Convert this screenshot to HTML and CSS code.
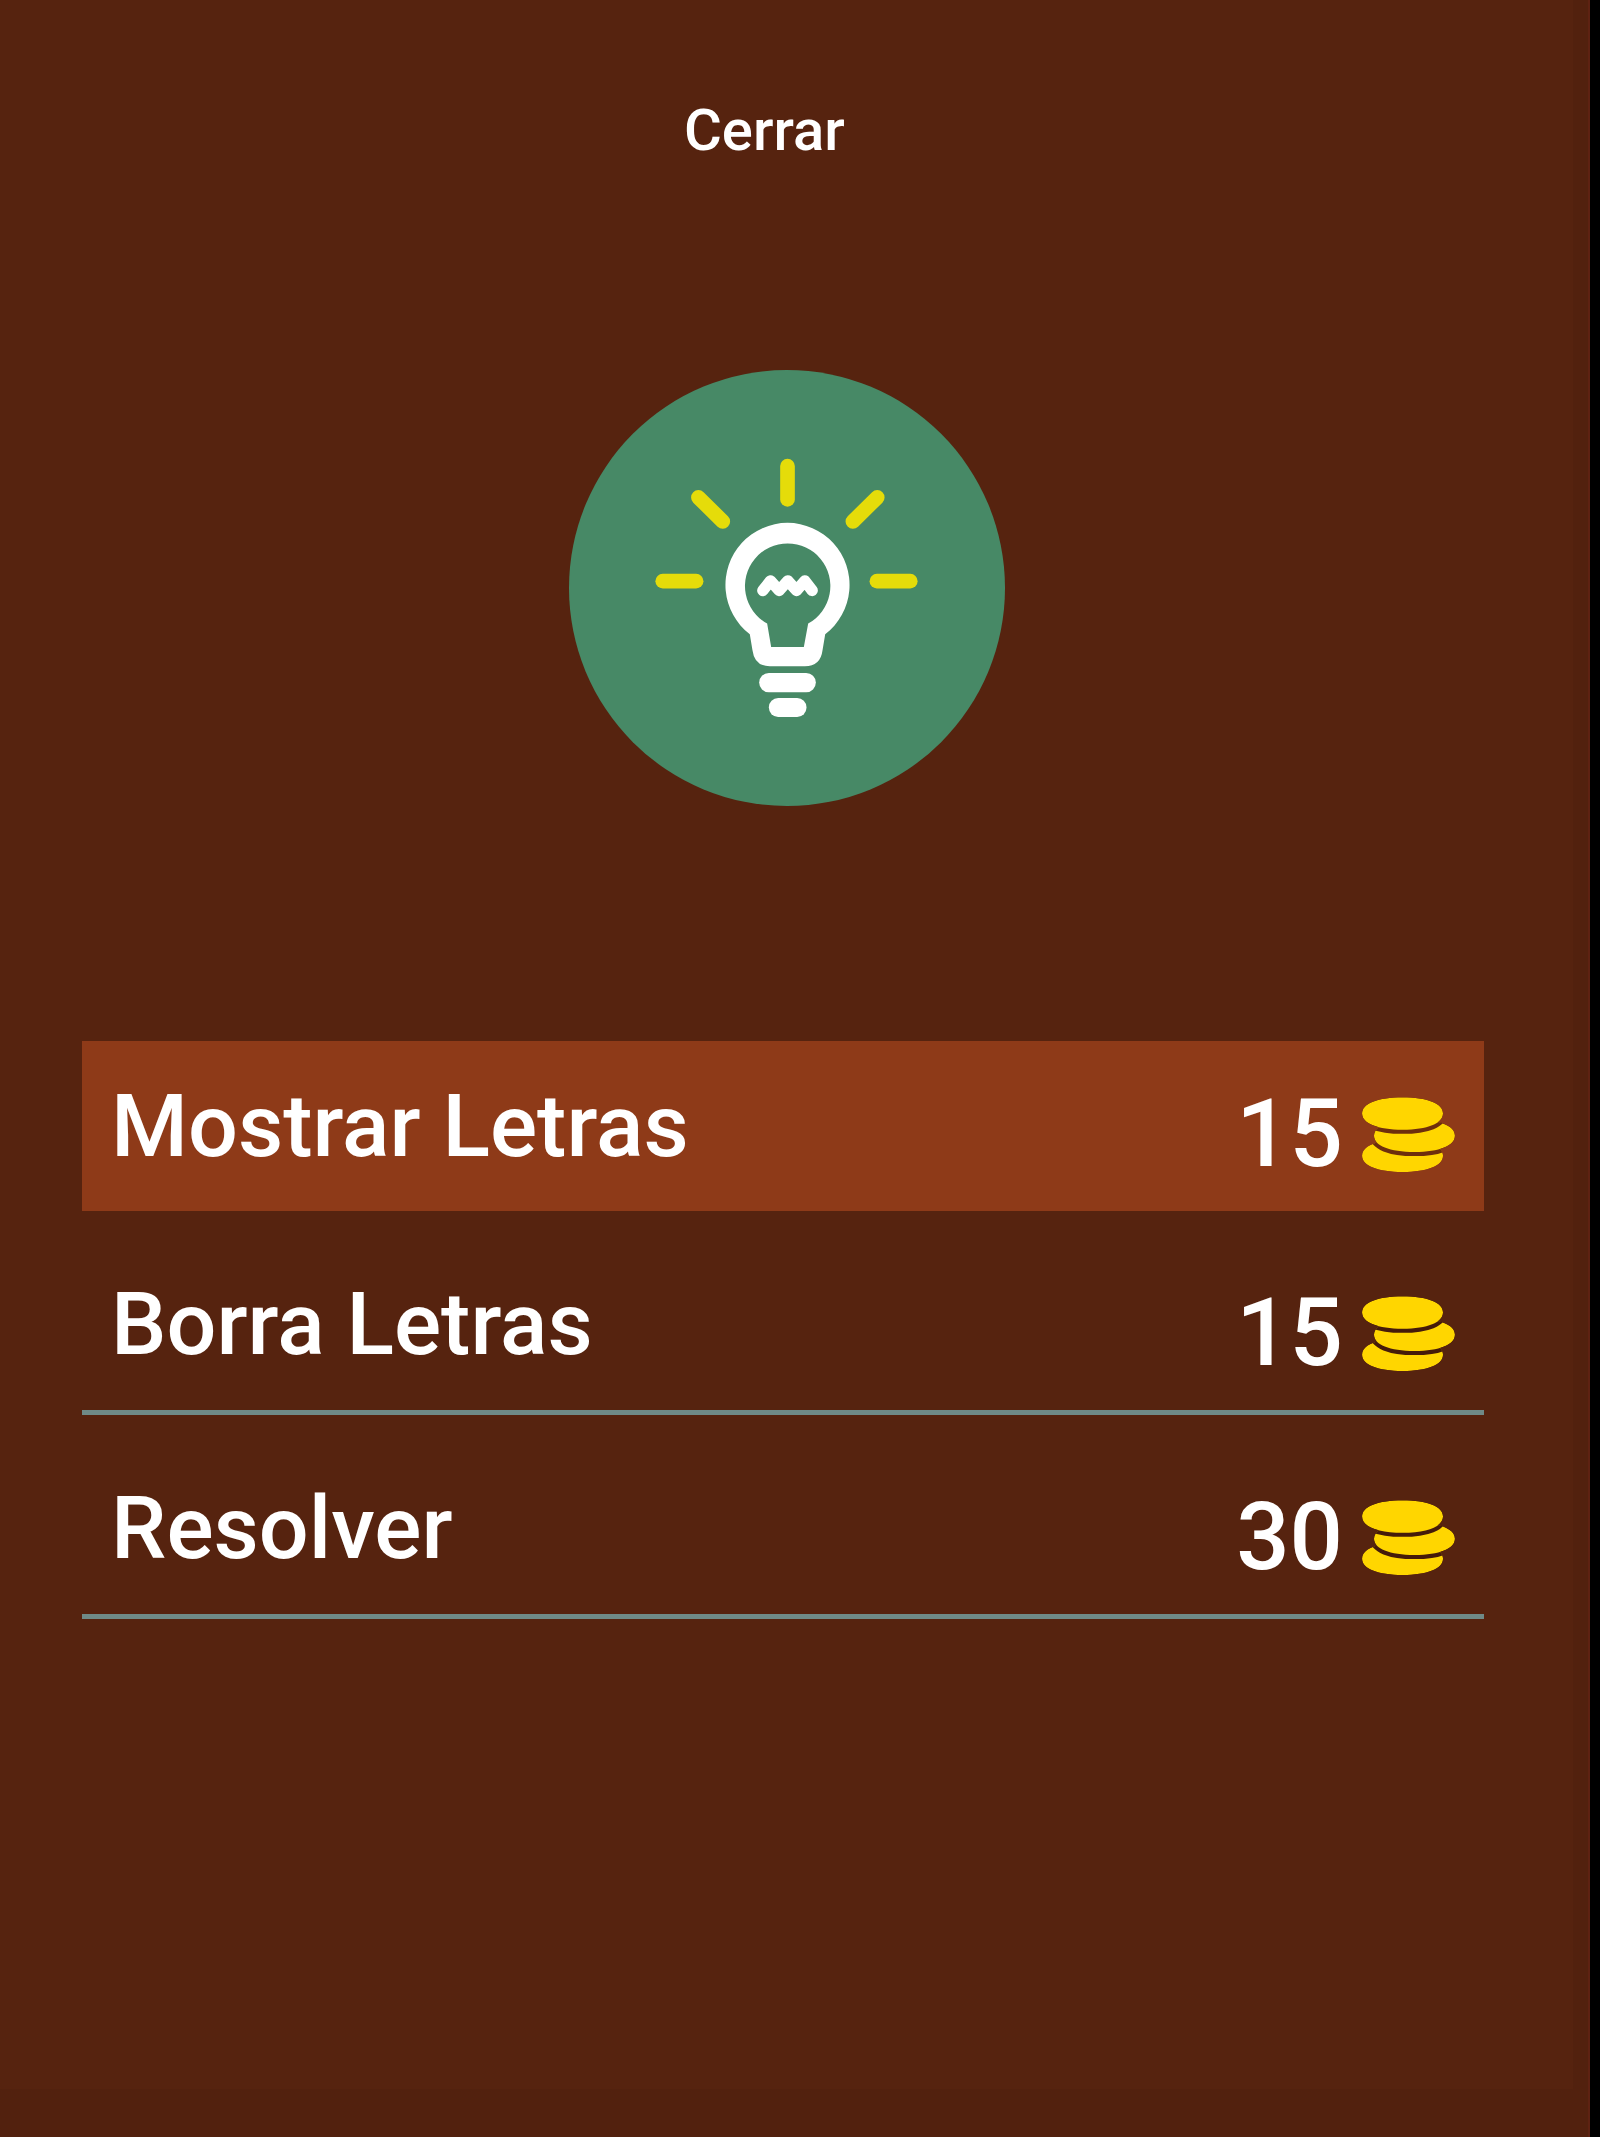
FILE: index.html
```html
<!DOCTYPE html>
<html lang="es">
<head>
    <meta charset="UTF-8">
    <meta name="viewport" content="width=device-width, initial-scale=1.0">
    <title>Pistas</title>
    <link rel="stylesheet" href="styles.css">
</head>
<body>
    <svg class="defs" width="0" height="0" aria-hidden="true">
        <defs>
            <path id="coinShape" d="M-122 0C-122 -30 -75 -49 0 -49S122 -30 122 0S75 49 0 49S-122 30 -122 0Z"/>
            <clipPath id="coinClip">
                <use href="#coinShape" x="547" y="220"/>
                <use href="#coinShape" x="583" y="287"/>
                <use href="#coinShape" x="547" y="347"/>
            </clipPath>
            <symbol id="coins" viewBox="425 170 280 226">
                <g clip-path="url(#coinClip)">
                    <use class="coin" href="#coinShape" x="547" y="347"/>
                    <use class="coin-edge" href="#coinShape" x="583" y="287"/>
                    <use class="coin" href="#coinShape" x="583" y="287"/>
                    <use class="coin-edge" href="#coinShape" x="547" y="220"/>
                    <use class="coin" href="#coinShape" x="547" y="220"/>
                </g>
            </symbol>
        </defs>
    </svg>

    <div class="screen">
        <div class="panel">
            <a class="close" href="#">Cerrar</a>

            <div class="hint-circle">
                <svg class="bulb" viewBox="28 30 1307 1307">
                    <g class="rays">
                        <path d="M683 318V418"/>
                        <path d="M309 663H409"/>
                        <path d="M951 663H1051"/>
                        <path d="M416 412L489 484"/>
                        <path d="M952 412L879 484"/>
                    </g>
                    <path class="glass" fill-rule="evenodd" d="M570 822A186 186 0 1 1 796 822L788 870Q782 918 735 918H630Q584 918 578 870ZM622 790L634 860H732L745 790A128 128 0 1 0 622 790Z"/>
                    <path class="filament" d="M609 691L632 662L658 691L684 662L710 691L735 662L757 691"/>
                    <rect class="base" x="598" y="938" width="170" height="58" rx="29"/>
                    <rect class="base" x="627" y="1013" width="113" height="57" rx="28"/>
                </svg>
            </div>

            <ul class="options">
                <li class="option option-active">
                    <span class="option-name">Mostrar Letras</span>
                    <span class="option-price">15</span>
                    <svg class="coins"><use href="#coins"/></svg>
                </li>
                <li class="option">
                    <span class="option-name">Borra Letras</span>
                    <span class="option-price">15</span>
                    <svg class="coins"><use href="#coins"/></svg>
                </li>
                <li class="option">
                    <span class="option-name">Resolver</span>
                    <span class="option-price">30</span>
                    <svg class="coins"><use href="#coins"/></svg>
                </li>
            </ul>
        </div>
    </div>
</body>
</html>
```

FILE: styles.css
```css
html, body {
    margin: 0;
    padding: 0;
    background-color: #000;
}
body {
    font-family: Roboto, "Liberation Sans", sans-serif;
    color: #fff;
}
.defs {
    display: block;
    height: 0;
}
.screen {
    width: 1588px;
    height: 2137px;
    background-color: #52210e;
    border-right: 2px solid #5e2212;
    overflow: hidden;
}
.panel {
    width: 1573px;
    height: 2089px;
    background-color: #56230f;
    padding-top: 92px;
    box-sizing: border-box;
}
.close {
    display: block;
    width: 158px;
    margin-left: 684px;
    font-size: 58px;
    font-weight: 500;
    line-height: 76px;
    color: #fff;
    text-decoration: none;
    white-space: nowrap;
}
.hint-circle {
    width: 436px;
    height: 436px;
    margin: 202px 0 0 569px;
    border-radius: 50%;
    background-color: #478966;
}
.bulb {
    display: block;
    width: 436px;
    height: 436px;
}
.rays path {
    fill: none;
    stroke: #e5dc0a;
    stroke-width: 44;
    stroke-linecap: round;
}
.glass {
    fill: #fff;
}
.filament {
    fill: none;
    stroke: #fff;
    stroke-width: 34;
    stroke-linecap: round;
    stroke-linejoin: round;
}
.base {
    fill: #fff;
}
.options {
    list-style: none;
    margin: 235px 0 0 82px;
    padding: 0;
    width: 1402px;
}
.option {
    --coin-edge: #451b0a;
    display: flex;
    align-items: center;
    height: 170px;
    margin-top: 29px;
    padding: 0 29px 0 29px;
    border-bottom: 5px solid #6f8a87;
}
.option-active {
    --coin-edge: #6e2e0d;
    margin-top: 0;
    background-color: #8e3a18;
    border-bottom: none;
}
.option-name {
    flex: 1;
    font-size: 88px;
    font-weight: 500;
    line-height: 100px;
    margin-bottom: 2px;
}
.option-active .option-name {
    margin-bottom: 1px;
}
.option-price {
    font-size: 94px;
    font-weight: 500;
    line-height: 100px;
    margin-top: 16px;
}
.coins {
    width: 93px;
    height: 75px;
    margin: 16px 0 0 19px;
}
.coin {
    fill: #ffd600;
}
.coin-edge {
    fill: none;
    stroke: var(--coin-edge);
    stroke-width: 24;
}
```
